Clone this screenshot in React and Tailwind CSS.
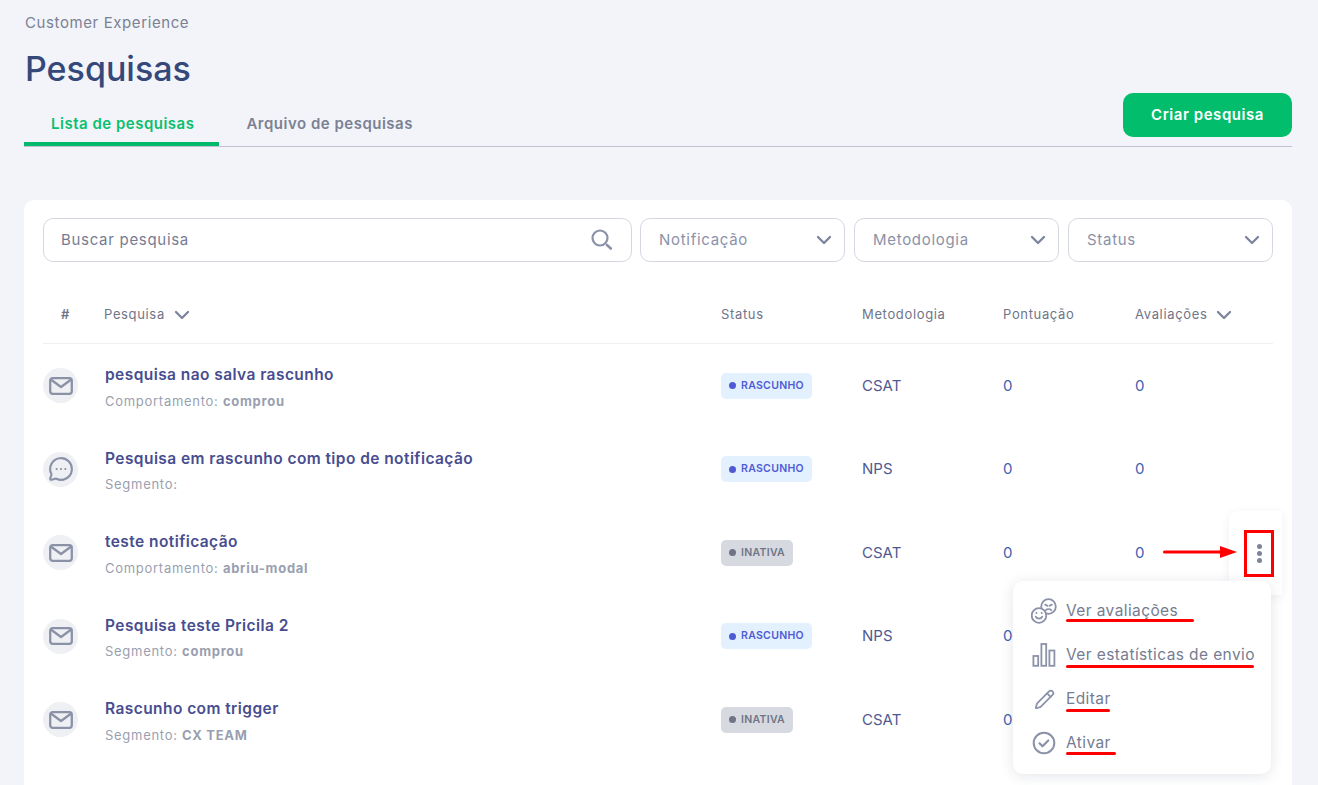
import React from "react";
import { ChevronDown, MessageCircleMore, Pencil } from "lucide-react";

const surveys = [
  { icon: "mail", title: "pesquisa nao salva rascunho", label: "Comportamento:", value: "comprou", status: "RASCUNHO", method: "CSAT" },
  { icon: "chat", title: "Pesquisa em rascunho com tipo de notificação", label: "Segmento:", value: "", status: "RASCUNHO", method: "NPS" },
  { icon: "mail", title: "teste notificação", label: "Comportamento:", value: "abriu-modal", status: "INATIVA", method: "CSAT" },
  { icon: "mail", title: "Pesquisa teste Pricila 2", label: "Segmento:", value: "comprou", status: "RASCUNHO", method: "NPS" },
  { icon: "mail", title: "Rascunho com trigger", label: "Segmento:", value: "CX TEAM", status: "INATIVA", method: "CSAT" },
];

const SearchIcon = () => (
  <svg width="22" height="22" viewBox="0 0 22 22" fill="none" stroke="#8b92a8">
    <circle cx="9" cy="9" r="7.5" strokeWidth="2.2" />
    <path d="M16 16l3.800 3.500" strokeWidth="2.600" strokeLinecap="round" />
  </svg>
);

const MailIcon = () => (
  <svg width="24" height="18" viewBox="0 0 24 18" fill="none" stroke="#8b92a8" strokeWidth="2.3" strokeLinejoin="round" strokeLinecap="round">
    <rect x="1.200" y="1.200" width="21.600" height="15.600" rx="2.500" />
    <path d="M2.500 3l9.500 7 9.500-7" />
  </svg>
);

const FacesIcon = () => (
  <svg width="26" height="26" viewBox="0 0 26 26" fill="none" stroke="#8b92a8" strokeWidth="1.8" strokeLinecap="round">
    <circle cx="17.500" cy="8.500" r="7.300" />
    <path d="M14.800 12.200c1.500-1.400 4-1.400 5.500 0M14.200 6.600l2.200 1.200M20.800 6.600l-2.200 1.200" />
    <circle cx="8" cy="17.500" r="7.300" fill="#fff" />
    <path d="M4.800 18.800c1.500 2.400 4.900 2.400 6.400 0M5.400 15h.1M10.600 15h.1" />
  </svg>
);

const BarsIcon = () => (
  <svg width="24" height="24" viewBox="0 0 24 24" fill="none" stroke="#8b92a8" strokeWidth="1.8">
    <rect x="1.400" y="13" width="4.800" height="9.800" />
    <rect x="9.400" y="1" width="4.800" height="21.800" />
    <rect x="17.400" y="7.500" width="5" height="15.300" />
  </svg>
);

const CheckIcon = () => (
  <svg width="24" height="24" viewBox="0 0 24 24" fill="none" stroke="#8b92a8" strokeLinecap="round" strokeLinejoin="round">
    <circle cx="12" cy="12" r="10.300" strokeWidth="2" />
    <path d="M7.500 12.300l3 3 5.800-5.800" strokeWidth="2.200" />
  </svg>
);

function Select({ label }) {
  return (
    <div className="flex h-[44px] w-[205px] items-center justify-between rounded-[10px] border border-[#d5d8e0] pl-[18px] pr-[8px]">
      <span className="text-[15px] tracking-[0.7px] text-[#8b92a8]">{label}</span>
      <ChevronDown size={24} strokeWidth={2.3} className="text-[#7d849b]" />
    </div>
  );
}

function Badge({ status }) {
  const draft = status === "RASCUNHO";
  return (
    <span
      className={`inline-flex h-[26px] items-center gap-[5px] rounded-[5px] pl-[8px] pr-[8px] text-[10.5px] font-semibold tracking-[0.3px] ${
        draft ? "bg-[#e3f0fe] text-[#4f5bd5]" : "bg-[#d6d9e0] text-[#6f7486]"
      }`}
    >
      <span className={`h-[7px] w-[7px] rounded-full ${draft ? "bg-[#4f5bd5]" : "bg-[#6f7486]"}`} />
      {status}
    </span>
  );
}

function Row({ survey }) {
  return (
    <div className="grid h-[83.5px] grid-cols-[61px_617px_141px_141px_132px_1fr] items-center">
      <div className="flex h-[35px] w-[35px] items-center justify-center rounded-full bg-[#eef0f3]">
        {survey.icon === "mail" ? <MailIcon /> : <MessageCircleMore size={26} strokeWidth={2} className="text-[#8b92a8]" />}
      </div>
      <div className="pl-[1px] pt-[3px]">
        <div className="text-[15.5px] font-semibold tracking-[0.43px] text-[#474d8f]">{survey.title}</div>
        <div className="mt-[5px] text-[13px] tracking-[0.72px] text-[#9a9fb0]">
          {survey.label} {survey.value && <span className="font-bold">{survey.value}</span>}
        </div>
      </div>
      <div className="flex">
        <Badge status={survey.status} />
      </div>
      <div className="text-[15px] text-[#4f5a92]">{survey.method}</div>
      <div className="text-[15px] text-[#3f5fb0]">0</div>
      <div className="text-[15px] text-[#3f5fb0]">0</div>
    </div>
  );
}

function MenuItem({ icon, label, line }) {
  return (
    <div className="relative flex h-[44px] items-center">
      <div className="flex w-[26px] shrink-0 justify-center">{icon}</div>
      <span className="ml-[9px] whitespace-nowrap text-[15.5px] tracking-[0.4px] text-[#767c92]">{label}</span>
      <span className={`absolute left-[35px] h-[3px] rounded-full bg-[#f00] ${line}`} />
    </div>
  );
}

export default function App() {
  return (
    <div className="relative h-[785px] overflow-hidden bg-[#f2f4f9] pl-[24px] pr-[26px] font-['Inter',sans-serif]">
      <div className="pl-[1px] pt-[13px] text-[15px] leading-[20px] tracking-[0.6px] text-[#7b8194]">Customer Experience</div>
      <div className="flex items-end justify-between border-b border-[#c0c1d3]">
        <div>
          <h1 className="mt-[10px] pl-[1px] text-[34px] font-medium leading-[52px] text-[#35487a]">Pesquisas</h1>
          <div className="mt-[17px] flex text-[15px] font-semibold tracking-[0.5px]">
            <div className="h-[34px] rounded-t-[3px] border-b-[4px] border-[#03b96b] pl-[27px] pr-[25px] pt-[1px] text-[#0bbf6f]">Lista de pesquisas</div>
            <div className="pl-[27px] pr-[25px] pt-[1px] text-[#7b8194]">Arquivo de pesquisas</div>
          </div>
        </div>
        <button className="mb-[9px] flex h-[44px] w-[169px] items-center justify-center rounded-[10px] bg-[#02bd6c] text-[15px] font-semibold tracking-[0.55px] text-white">
          Criar pesquisa
        </button>
      </div>

      <div className="mt-[53px] h-[600px] rounded-[10px] bg-white px-[19px] pt-[18px]">
        <div className="flex gap-[9px]">
          <div className="-mr-[1px] flex h-[44px] w-[589px] items-center justify-between rounded-[10px] border border-[#d5d8e0] pl-[17px] pr-[18px]">
            <span className="text-[15px] tracking-[0.7px] text-[#767c92]">Buscar pesquisa</span>
            <SearchIcon />
          </div>
          <Select label="Notificação" />
          <Select label="Metodologia" />
          <Select label="Status" />
        </div>

        <div className="mt-[22px] grid h-[60px] grid-cols-[61px_617px_141px_141px_132px_1fr] items-center border-b border-[#eef0f3] pt-[3px] text-[13px] tracking-[0.65px] text-[#6f7589]">
          <div className="pl-[18px] font-semibold">#</div>
          <div className="flex items-center gap-[5px]">
            Pesquisa <ChevronDown size={24} strokeWidth={2.3} className="text-[#7d849b]" />
          </div>
          <div>Status</div>
          <div>Metodologia</div>
          <div>Pontuação</div>
          <div className="flex items-center gap-[5px]">
            Avaliações <ChevronDown size={24} strokeWidth={2.3} className="text-[#7d849b]" />
          </div>
        </div>

        {surveys.map((survey) => (
          <Row key={survey.title} survey={survey} />
        ))}
      </div>

      {/* action button, with the red markup over it */}
      <div className="absolute left-[1229px] top-[511px] flex h-[84px] w-[53px] items-center justify-end rounded-l-[10px] bg-white pr-[8px] shadow-[0_2px_10px_rgba(60,70,100,0.08)]">
        <div className="flex h-[47px] w-[30px] flex-col items-center justify-center gap-[2px] border-[3px] border-[#f00]">
          <span className="h-[5px] w-[5px] rounded-full bg-[#7d849b]" />
          <span className="h-[5px] w-[5px] rounded-full bg-[#7d849b]" />
          <span className="h-[5px] w-[5px] rounded-full bg-[#7d849b]" />
        </div>
      </div>
      <div className="absolute left-[1163px] top-[544px]">
        <svg width="74" height="16" viewBox="0 0 74 16" fill="#f00">
          <rect x="0" y="6.500" width="60" height="3" rx="1.500" />
          <path d="M57 2l17 6-17 6z" />
        </svg>
      </div>

      <div className="absolute left-[1013px] top-[581px] w-[258px] rounded-[10px] bg-white px-[18px] pb-[9px] pt-[8px] shadow-[0_2px_14px_rgba(60,70,100,0.14)]">
        <MenuItem icon={<FacesIcon />} label="Ver avaliações" line="top-[30px] w-[128px]" />
        <MenuItem icon={<BarsIcon />} label="Ver estatísticas de envio" line="top-[32px] w-[188px]" />
        <MenuItem icon={<Pencil size={21} strokeWidth={2} className="text-[#8b92a8]" />} label="Editar" line="top-[32px] w-[44px]" />
        <MenuItem icon={<CheckIcon />} label="Ativar" line="top-[31px] w-[50px]" />
      </div>
    </div>
  );
}
